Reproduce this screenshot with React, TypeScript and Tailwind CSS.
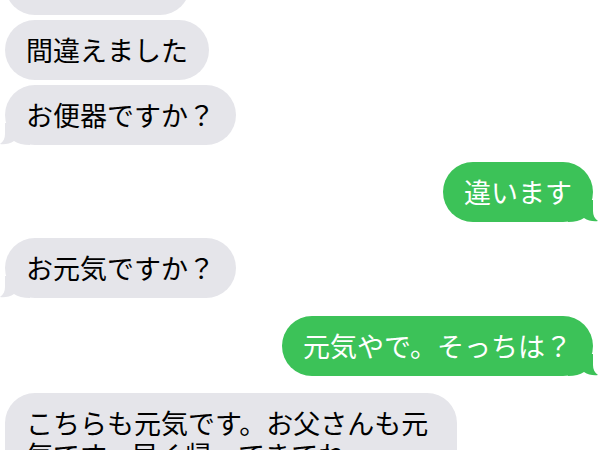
import type { ReactNode } from 'react'

type Side = 'in' | 'out'

interface Message {
  side: Side
  text: string
  tail?: boolean
  gap: string
}

const messages: Message[] = [
  { side: 'in', text: 'すみません!', gap: 'mt-[-45px]' },
  { side: 'in', text: '間違えました', gap: 'mt-[5px]' },
  { side: 'in', text: 'お便器ですか？', tail: true, gap: 'mt-[5px]' },
  { side: 'out', text: '違います', tail: true, gap: 'mt-[17px]' },
  { side: 'in', text: 'お元気ですか？', tail: true, gap: 'mt-[16px]' },
  { side: 'out', text: '元気やで。そっちは？', tail: true, gap: 'mt-[18px]' },
  { side: 'in', text: 'こちらも元気です。お父さんも元気です。早く帰ってきてね', tail: true, gap: 'mt-[17px]' },
]

function Tail({ side }: { side: Side }) {
  if (side === 'in') {
    return (
      <svg className="absolute left-[-5px] bottom-0" width="30" height="22" viewBox="0 0 30 22">
        <path d="M5 0 L5 11 C5 15.5 3.5 18.5 0 21 C5 21.6 10 20.6 14 18 C18 20.5 23 22 30 22 L30 0 Z" fill="#e5e5ea" />
      </svg>
    )
  }
  return (
    <svg className="absolute right-[-5px] bottom-0" width="30" height="22" viewBox="0 0 30 22">
      <path d="M25 0 L25 11 C25 15.5 26.5 18.5 30 21 C25 21.6 20 20.6 16 18 C12 20.5 7 22 0 22 L0 0 Z" fill="#3cc258" />
    </svg>
  )
}

function Bubble({ message }: { message: Message }) {
  const isIn = message.side === 'in'
  return (
    <div className={`flex ${isIn ? 'justify-start' : 'justify-end'} ${message.gap}`}>
      <div
        className={`relative max-w-[452px] rounded-[30px] px-[21px] py-[14px] text-[27px] leading-[32px] ${
          isIn ? 'bg-[#e5e5ea] text-black' : 'bg-[#3cc258] text-white'
        }`}
      >
        {message.tail && <Tail side={message.side} />}
        <span className="relative">{message.text}</span>
      </div>
    </div>
  )
}

function Screen({ children }: { children: ReactNode }) {
  return (
    <div
      className="w-[600px] h-[450px] overflow-hidden bg-white"
      style={{ fontFamily: '"Noto Sans CJK JP", "Noto Sans", sans-serif' }}
    >
      <div className="flex flex-col pl-[5px] pr-[7px]">{children}</div>
    </div>
  )
}

export default function App() {
  return (
    <Screen>
      {messages.map((m, i) => (
        <Bubble key={i} message={m} />
      ))}
    </Screen>
  )
}
